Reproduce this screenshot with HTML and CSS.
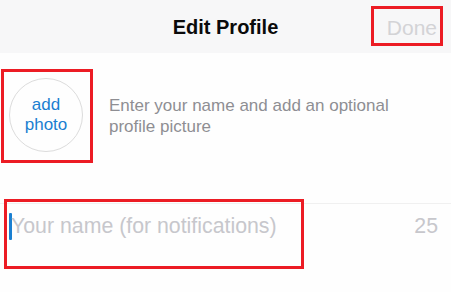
FILE: index.html
```html
<!DOCTYPE html>
<html lang="en">
<head>
    <meta charset="UTF-8">
    <meta name="viewport" content="width=device-width, initial-scale=1.0">
    <title>Edit Profile</title>
    <link rel="stylesheet" href="styles.css">
</head>
<body>
    <div class="screen">
        <!-- Navigation bar -->
        <header class="nav-bar">
            <span class="nav-side"></span>
            <h1 class="nav-title">Edit Profile</h1>
            <span class="nav-side nav-side-right">
                <button class="nav-done" disabled>Done</button>
            </span>
        </header>

        <!-- Photo + hint -->
        <section class="profile-row">
            <div class="photo-circle">add<br>photo</div>
            <p class="profile-hint">Enter your name and add an optional profile picture</p>
        </section>

        <!-- Name input -->
        <section class="name-row">
            <span class="caret"></span>
            <span class="name-placeholder">Your name (for notifications)</span>
            <span class="name-count">25</span>
        </section>

        <!-- Annotation boxes -->
        <div class="mark mark-done"></div>
        <div class="mark mark-photo"></div>
        <div class="mark mark-name"></div>
    </div>
</body>
</html>
```

FILE: styles.css
```css
body {
    margin: 0;
    padding: 0;
    font-family: 'Liberation Sans', Arial, sans-serif;
    background: #fefefe;
}

.screen {
    position: relative;
    width: 451px;
    height: 292px;
    overflow: hidden;
}

.nav-bar {
    display: grid;
    grid-template-columns: 1fr auto 1fr;
    align-items: center;
    height: 53px;
    background: #f7f7f8;
}

.nav-title {
    margin: 0;
    padding-top: 2px;
    font-size: 20px;
    font-weight: 700;
    color: #0b0b0b;
}

.nav-side-right {
    display: flex;
    justify-content: flex-end;
    padding-right: 14px;
}

.nav-done {
    border: 0;
    padding: 2px 0 0;
    background: none;
    font-family: inherit;
    font-size: 21px;
    font-weight: 400;
    color: #d3d3d6;
}

.profile-row {
    display: flex;
    align-items: center;
    gap: 26px;
    padding: 25px 0 0 9px;
}

.photo-circle {
    display: flex;
    align-items: center;
    justify-content: center;
    flex-shrink: 0;
    box-sizing: border-box;
    width: 74px;
    height: 74px;
    border: 1px solid #dcdcdc;
    border-radius: 50%;
    text-align: center;
    font-size: 17px;
    line-height: 20px;
    color: #1a7fd1;
}

.profile-hint {
    max-width: 300px;
    margin: 0;
    padding-top: 1px;
    font-size: 17px;
    line-height: 21px;
    color: #8e8e93;
}

.name-row {
    display: flex;
    align-items: center;
    margin-top: 51px;
    height: 44px;
    padding: 0 13px 0 9px;
    border-top: 1px solid #f0f0f0;
}

.caret {
    width: 3px;
    height: 27px;
    margin-right: -1px;
    background: #1a7fd1;
    border-radius: 1px;
}

.name-placeholder {
    flex: 1;
    font-size: 21.3px;
    color: #c7c7cc;
}

.name-count {
    font-size: 21.3px;
    color: #c7c7cc;
}

/* Red annotation boxes drawn over the screenshot */
.mark {
    position: absolute;
    box-sizing: border-box;
    border: 3px solid #ec1c24;
}

.mark-done {
    left: 371px;
    top: 6px;
    width: 72px;
    height: 40px;
}

.mark-photo {
    left: 1px;
    top: 69px;
    width: 92px;
    height: 94px;
}

.mark-name {
    left: 4px;
    top: 199px;
    width: 300px;
    height: 70px;
}
```
